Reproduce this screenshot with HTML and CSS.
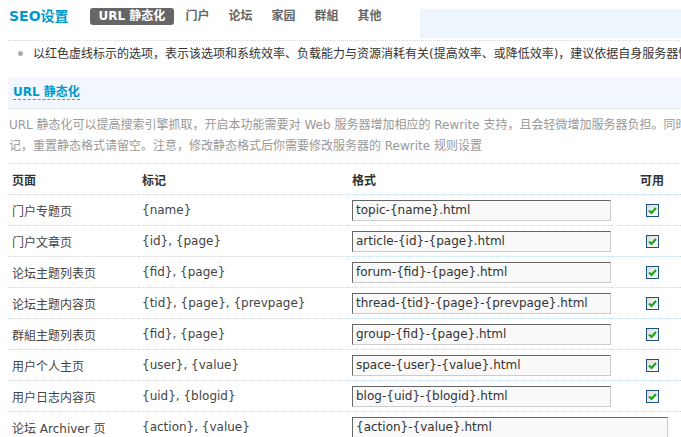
FILE: index.html
```html
<!DOCTYPE html>
<html lang="zh-CN">
<head>
  <meta charset="UTF-8">
  <title>SEO设置 - URL 静态化</title>
  <link rel="stylesheet" href="styles.css">
</head>
<body>
  <div class="container">
    <!-- Top bar: title + tabs -->
    <div class="floattop">
      <h3>SEO设置</h3>
      <ul class="tab1">
        <li class="current"><a href="#">URL 静态化</a></li>
        <li><a href="#">门户</a></li>
        <li><a href="#">论坛</a></li>
        <li><a href="#">家园</a></li>
        <li><a href="#">群組</a></li>
        <li><a href="#">其他</a></li>
      </ul>
      <div class="floatsearch"></div>
    </div>

    <!-- Tip -->
    <ul class="tips">
      <li>以红色虚线标示的选项，表示该选项和系统效率、负载能力与资源消耗有关(提高效率、或降低效率)，建议依据自身服务器情况进行调整。</li>
    </ul>

    <div class="partition">
      <span class="lineheight">URL 静态化</span>
    </div>
    <p class="desc">URL 静态化可以提高搜索引擎抓取，开启本功能需要对 Web 服务器增加相应的 Rewrite 支持，且会轻微增加服务器负担。同时你可以调整每个页面的静态格式，但不得删除其中的标<br>记，重置静态格式请留空。注意，修改静态格式后你需要修改服务器的 Rewrite 规则设置</p>

    <table class="tb">
      <colgroup>
        <col class="c-page">
        <col class="c-mark">
        <col class="c-format">
        <col class="c-avail">
      </colgroup>
      <thead>
        <tr>
          <th>页面</th>
          <th>标记</th>
          <th>格式</th>
          <th class="center">可用</th>
        </tr>
      </thead>
      <tbody>
        <tr>
          <td>门户专题页</td>
          <td>{name}</td>
          <td><input class="txt" type="text" value="topic-{name}.html"></td>
          <td class="center"><span class="checkbox"><svg viewBox="0 0 11 11" width="11" height="11"><path d="M2 5.5 L4.5 8 L9 3" fill="none" stroke="#1fa31f" stroke-width="2.2"/></svg></span></td>
        </tr>
        <tr>
          <td>门户文章页</td>
          <td>{id}, {page}</td>
          <td><input class="txt" type="text" value="article-{id}-{page}.html"></td>
          <td class="center"><span class="checkbox"><svg viewBox="0 0 11 11" width="11" height="11"><path d="M2 5.5 L4.5 8 L9 3" fill="none" stroke="#1fa31f" stroke-width="2.2"/></svg></span></td>
        </tr>
        <tr>
          <td>论坛主题列表页</td>
          <td>{fid}, {page}</td>
          <td><input class="txt" type="text" value="forum-{fid}-{page}.html"></td>
          <td class="center"><span class="checkbox"><svg viewBox="0 0 11 11" width="11" height="11"><path d="M2 5.5 L4.5 8 L9 3" fill="none" stroke="#1fa31f" stroke-width="2.2"/></svg></span></td>
        </tr>
        <tr>
          <td>论坛主题内容页</td>
          <td>{tid}, {page}, {prevpage}</td>
          <td><input class="txt" type="text" value="thread-{tid}-{page}-{prevpage}.html"></td>
          <td class="center"><span class="checkbox"><svg viewBox="0 0 11 11" width="11" height="11"><path d="M2 5.5 L4.5 8 L9 3" fill="none" stroke="#1fa31f" stroke-width="2.2"/></svg></span></td>
        </tr>
        <tr>
          <td>群組主题列表页</td>
          <td>{fid}, {page}</td>
          <td><input class="txt" type="text" value="group-{fid}-{page}.html"></td>
          <td class="center"><span class="checkbox"><svg viewBox="0 0 11 11" width="11" height="11"><path d="M2 5.5 L4.5 8 L9 3" fill="none" stroke="#1fa31f" stroke-width="2.2"/></svg></span></td>
        </tr>
        <tr>
          <td>用户个人主页</td>
          <td>{user}, {value}</td>
          <td><input class="txt" type="text" value="space-{user}-{value}.html"></td>
          <td class="center"><span class="checkbox"><svg viewBox="0 0 11 11" width="11" height="11"><path d="M2 5.5 L4.5 8 L9 3" fill="none" stroke="#1fa31f" stroke-width="2.2"/></svg></span></td>
        </tr>
        <tr>
          <td>用户日志内容页</td>
          <td>{uid}, {blogid}</td>
          <td><input class="txt" type="text" value="blog-{uid}-{blogid}.html"></td>
          <td class="center"><span class="checkbox"><svg viewBox="0 0 11 11" width="11" height="11"><path d="M2 5.5 L4.5 8 L9 3" fill="none" stroke="#1fa31f" stroke-width="2.2"/></svg></span></td>
        </tr>
        <tr>
          <td>论坛 Archiver 页</td>
          <td>{action}, {value}</td>
          <td colspan="2"><input class="txt wide" type="text" value="{action}-{value}.html"></td>
        </tr>
      </tbody>
    </table>
  </div>
</body>
</html>
```

FILE: styles.css
```css
html, body {
  overflow: hidden;
}
body {
  margin: 0;
  background: #fff;
  font: 12px "DejaVu Sans", "Noto Sans CJK SC", sans-serif;
  color: #444;
}
a {
  text-decoration: none;
}
.container {
  width: 990px;
  padding: 8px 0 0 8px;
}

/* top bar */
.floattop {
  display: flex;
  align-items: flex-start;
  height: 32px;
  border-bottom: 1px dotted #c4dcf0;
}
.floattop h3 {
  margin: 0 21px 0 1px;
  font-size: 14px;
  line-height: 17px;
  color: #09c;
}
.tab1 {
  display: flex;
  margin: 0;
  padding: 0;
  list-style: none;
}
.tab1 li {
  margin-right: 3px;
}
.tab1 a {
  display: block;
  padding: 0 8px;
  line-height: 17px;
  font-weight: bold;
  color: #666;
  border-radius: 3px;
}
.tab1 .current a {
  padding: 0 9px;
  background: #666;
  color: #fff;
}
.floatsearch {
  margin-left: auto;
  margin-top: 1px;
  width: 578px;
  height: 29px;
  background: #eef5fc;
}

/* tip */
.tips {
  margin: 0;
  padding: 3px 0 13px 25px;
  list-style: none;
  white-space: nowrap;
  line-height: 20px;
  color: #333;
}
.tips li {
  position: relative;
}
.tips li::before {
  content: "";
  position: absolute;
  left: -15px;
  top: 7px;
  width: 5px;
  height: 5px;
  border-radius: 50%;
  background: #aaa;
}

/* section title */
.partition {
  padding: 8px 5px 8px;
  background: #f2f7fd;
  border-bottom: 1px dotted #c4dcf0;
}
.lineheight {
  display: inline-block;
  line-height: 14px;
  font-weight: bold;
  color: #09c;
  border-bottom: 1px dashed #f55;
}
.desc {
  margin: 0;
  padding: 6px 1px 6px;
  line-height: 21px;
  color: #999;
  white-space: nowrap;
  border-bottom: 1px dotted #c4dcf0;
}

/* table */
.tb {
  width: 685px;
  table-layout: fixed;
  border-collapse: collapse;
}
.c-page { width: 130px; }
.c-mark { width: 210px; }
.c-format { width: 263px; }
.c-avail { width: 82px; }
.tb th,
.tb td {
  height: 30px;
  padding: 0 4px;
  text-align: left;
  white-space: nowrap;
  border-bottom: 1px dotted #c4dcf0;
}
.tb th {
  color: #333;
}
.tb .center {
  text-align: center;
}
.txt {
  display: block;
  box-sizing: border-box;
  width: 259px;
  height: 21px;
  margin: 0;
  padding: 0 3px;
  font: 12px "DejaVu Sans", "Noto Sans CJK SC", sans-serif;
  color: #333;
  background: #f9f9f9;
  border: 1px solid;
  border-color: #666 #ccc #ccc #666;
}
.txt.wide {
  width: 316px;
}
.checkbox {
  display: inline-flex;
  align-items: center;
  justify-content: center;
  width: 11px;
  height: 11px;
  border: 1px solid #1c5180;
  background: linear-gradient(135deg, #dcdcd7, #fff);
  vertical-align: middle;
}
```
